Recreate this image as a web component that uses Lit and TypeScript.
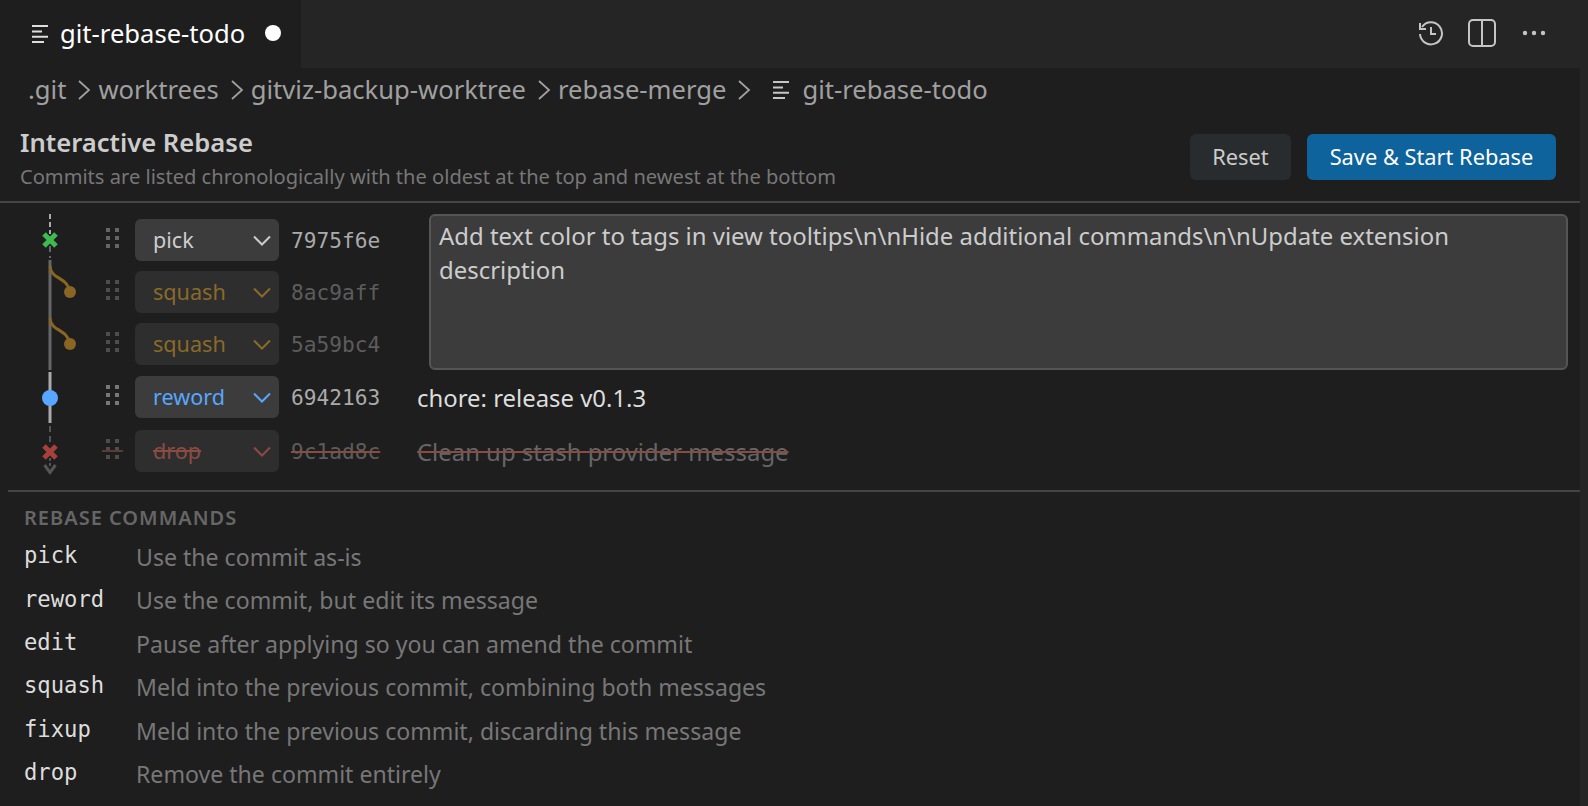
import { LitElement, html, css, svg } from "lit";
import { customElement } from "lit/decorators.js";

const fileIcon = (cls: string) => html`<svg class=${cls} width="18" height="20" viewBox="0 0 18 20" fill="none" stroke="currentColor" stroke-width="2"><path d="M1 2h16M1 7.4h10M1 12.7h16M1 18h12"/></svg>`;
const chev = html`<svg class="chev" width="18" height="12" viewBox="0 0 18 12" fill="none" stroke="currentColor" stroke-width="2"><path d="M1 1.5L9 9.5 17 1.5"/></svg>`;
const crumbSep = html`<svg class="sep" width="14" height="22" viewBox="0 0 14 22" fill="none" stroke="currentColor" stroke-width="1.8"><path d="M2 2l10 9-10 9"/></svg>`;
const grip = html`<svg class="grip" width="14" height="20" viewBox="0 0 14 20" fill="currentColor"><rect x="0" y="0" width="4" height="4"/><rect x="9" y="0" width="4" height="4"/><rect x="0" y="8" width="4" height="4"/><rect x="9" y="8" width="4" height="4"/><rect x="0" y="16" width="4" height="4"/><rect x="9" y="16" width="4" height="4"/></svg>`;

interface Row { cmd: string; hash: string; msg?: string; cls: string }
const top: Row[] = [
  { cmd: "pick", hash: "7975f6e", cls: "pick" },
  { cmd: "squash", hash: "8ac9aff", cls: "squash" },
  { cmd: "squash", hash: "5a59bc4", cls: "squash" },
];
const cmds = [
  ["pick", "Use the commit as-is"],
  ["reword", "Use the commit, but edit its message"],
  ["edit", "Pause after applying so you can amend the commit"],
  ["squash", "Meld into the previous commit, combining both messages"],
  ["fixup", "Meld into the previous commit, discarding this message"],
  ["drop", "Remove the commit entirely"],
];

@customElement("app-root")
export class AppRoot extends LitElement {
  static styles = css`
    :host { display: flex; width: 1588px; height: 806px; overflow: hidden; background: #1e1e1e; color: #ccc; font-family: "Noto Sans", sans-serif; }
    .main { flex: 1; min-width: 0; display: flex; flex-direction: column; }
    .strip { width: 8px; background: #252526; }
    .tabs { height: 68px; flex: none; display: flex; align-items: center; justify-content: space-between; background: #252526; }
    .tab { width: 301px; height: 68px; background: #1e1e1e; display: flex; align-items: center; color: #fff; font-size: 25.6px; padding: 0 0 2px 31px; box-sizing: border-box; }
    .tab .ficon { margin: 2px 11px 0 0; color: #ddd; }
    .dot { width: 16px; height: 16px; border-radius: 50%; background: #fff; margin-left: 20px; }
    .actions { display: flex; align-items: center; color: #c5c5c5; margin: 0 34px 2px 0; }
    .actions svg { display: block; }
    .a1 { margin-right: 24px; }
    .a2 { margin-right: 26px; }
    .crumbs { height: 45px; flex: none; display: flex; align-items: center; padding: 0 0 2px 28px; box-sizing: border-box; font-size: 25.6px; color: #a0a0a0; }
    .sep { margin: 0 7px 0 11px; flex: none; color: #a0a0a0; }
    .crumbs .ficon { margin: 0 12px 0 14px; color: #c5c5c5; }
    .head { height: 90px; flex: none; box-sizing: border-box; display: flex; justify-content: space-between; align-items: flex-start; padding: 0 24px 0 20px; border-bottom: 2px solid #454545; }
    .title { font-size: 25.6px; font-weight: 600; color: #ccc; line-height: 36px; margin-top: 12px; }
    .desc { font-size: 20.1px; color: #777; line-height: 28px; margin-top: 2px; }
    .btns { display: flex; gap: 16px; margin-top: 21px; }
    .btn { height: 46px; box-sizing: border-box; padding-bottom: 2px; display: flex; align-items: center; justify-content: center; border-radius: 6px; font-size: 21.8px; }
    .reset { width: 101px; background: #292c2e; color: #ccc; }
    .save { width: 249px; background: #0e639c; color: #fff; }
    .rows { position: relative; height: 289px; flex: none; box-sizing: border-box; padding: 11px 12px 0 0; border-bottom: 2px solid #454545; margin-left: 8px; }
    .graph { position: absolute; left: -8px; top: 0; }
    .group { display: flex; align-items: flex-start; }
    .gl { display: flex; flex-direction: column; gap: 10px; width: 421px; flex: none; padding-top: 5px; box-sizing: border-box; }
    .msgbox { flex: 1; height: 156px; box-sizing: border-box; background: #3c3c3c; border: 2px solid #555; border-radius: 6px; padding: 3px 8px; font-size: 23.93px; line-height: 34px; color: #ccc; }
    .row { display: flex; align-items: center; height: 42px; padding-left: 98px; }
    .row.mt { margin-top: 6px; }
    .row.mt2 { margin-top: 12px; }
    .grip { flex: none; color: #666; margin: 0 15px 4px 0; }
    .sel { width: 144px; height: 42px; flex: none; box-sizing: border-box; border-radius: 6px; background: #3c3c3c; display: flex; align-items: center; justify-content: space-between; padding: 0 8px 2px 18px; font-size: 21.6px; color: #ccc; }
    .chev { margin-top: 4px; }
    .hash { font-family: "DejaVu Sans Mono", monospace; font-size: 21.2px; color: #aaa; margin-left: 12px; width: 126px; flex: none; }
    .msg { font-size: 23.9px; color: #ddd; white-space: nowrap; }
    .dim .grip { color: #4d4d4d; }
    .dim .sel { background: #2e2e2e; }
    .dim .hash { color: #5c5c5c; }
    .squash .sel { color: #8a6a28; }
    .reword .sel { color: #58a6ff; }
    .reword .grip { color: #777; }
    .drop { position: relative; }
    .drop .sel { color: #8a4b43; }
    .drop .sel span, .drop .hash, .drop .msg { text-decoration: line-through; text-decoration-color: #8a4b43; text-decoration-thickness: 2px; }
    .drop .msg { color: #666; }
    .strike { position: absolute; left: 94px; width: 21px; height: 2px; top: 20px; background: #5e3a37; }
    .cmds { padding: 12px 0 0 24px; }
    .cmds h3 { margin: 0 0 3.3px; font-size: 20px; font-weight: 600; letter-spacing: 1px; color: #666; line-height: 28px; }
    .list { display: grid; grid-template-columns: 112px 1fr; grid-auto-rows: 43.4px; align-items: center; }
    .c { font-family: "DejaVu Sans Mono", monospace; font-size: 22.2px; color: #ddd; margin-top: -3.5px; }
    .d { font-size: 23.1px; color: #777; }
  `;

  private graph() {
    const branch = (y: number) => svg`<path d="M50 ${y - 26}C51 ${y - 12} 67 ${y - 16} 70 ${y}" fill="none" stroke="#8a6523" stroke-width="3"/><circle cx="70" cy="${y}" r="6" fill="#8a6523"/>`;
    const x = (y: number, c: string) => svg`<path d="M44 ${y - 6}l12 12M56 ${y - 6}l-12 12" stroke="${c}" stroke-width="5" fill="none"/>`;
    return svg`<svg class="graph" width="100" height="289" viewBox="0 203 100 289" fill="none">
      <path d="M50 214v20" stroke="#aaa" stroke-width="2" stroke-dasharray="5 3"/>
      <path d="M50 246v12" stroke="#666" stroke-width="2" stroke-dasharray="6 4"/>
      <path d="M50 260v110" stroke="#666" stroke-width="3"/>
      ${x(240, "#3fb950")}
      ${branch(292)}${branch(344)}
      <path d="M50 372v51" stroke="#aaa" stroke-width="3"/>
      <circle cx="50" cy="398" r="8" fill="#58a6ff"/>
      <path d="M50 426v18" stroke="#555" stroke-width="2" stroke-dasharray="6 4"/>
      <path d="M50 458v8" stroke="#555" stroke-width="2" stroke-dasharray="3 2"/>
      ${x(452, "#a5403b")}
      <path d="M44.5 465l5.5 7.5 5.5-7.5" stroke="#555" stroke-width="3"/>
    </svg>`;
  }

  render() {
    return html`
      <div class="main">
        <div class="tabs">
          <div class="tab">${fileIcon("ficon")}git-rebase-todo<span class="dot"></span></div>
          <div class="actions">
            <svg class="a1" width="26" height="26" viewBox="0 0 26 26" fill="none" stroke="currentColor" stroke-width="2"><path d="M4 7a11 11 0 1 1-2 7"/><path d="M2 3v6h6"/><path d="M13 7v7h5"/></svg>
            <svg class="a2" width="28" height="28" viewBox="0 0 28 28" fill="none" stroke="currentColor" stroke-width="2"><rect x="1" y="1" width="26" height="26" rx="4"/><path d="M14 1v26"/></svg>
            <svg width="24" height="6" viewBox="0 0 24 6" fill="currentColor"><circle cx="3" cy="3" r="2.2"/><circle cx="12" cy="3" r="2.2"/><circle cx="21" cy="3" r="2.2"/></svg>
          </div>
        </div>
        <div class="crumbs">
          <span>.git</span>${crumbSep}<span>worktrees</span>${crumbSep}<span>gitviz-backup-worktree</span>${crumbSep}<span>rebase-merge</span>${crumbSep}${fileIcon("ficon")}<span>git-rebase-todo</span>
        </div>
        <div class="head">
          <div>
            <div class="title">Interactive Rebase</div>
            <div class="desc">Commits are listed chronologically with the oldest at the top and newest at the bottom</div>
          </div>
          <div class="btns"><div class="btn reset">Reset</div><div class="btn save">Save &amp; Start Rebase</div></div>
        </div>
        <div class="rows">
          ${this.graph()}
          <div class="group">
            <div class="gl">
              ${top.map((r, i) => html`
                <div class="row ${i ? "dim squash" : ""}">${grip}<div class="sel"><span>${r.cmd}</span>${chev}</div><div class="hash">${r.hash}</div></div>`)}
            </div>
            <div class="msgbox">Add text color to tags in view tooltips\\n\\nHide additional commands\\n\\nUpdate extension description</div>
          </div>
          <div class="row reword mt">${grip}<div class="sel"><span>reword</span>${chev}</div><div class="hash">6942163</div><div class="msg">chore: release v0.1.3</div></div>
          <div class="row dim drop mt2"><span class="strike"></span>${grip}<div class="sel"><span>drop</span>${chev}</div><div class="hash">9c1ad8c</div><div class="msg">Clean up stash provider message</div></div>
        </div>
        <div class="cmds">
          <h3>REBASE COMMANDS</h3>
          <div class="list">
            ${cmds.map(([c, d]) => html`<div class="c">${c}</div><div class="d">${d}</div>`)}
          </div>
        </div>
      </div>
      <div class="strip"></div>
    `;
  }
}
